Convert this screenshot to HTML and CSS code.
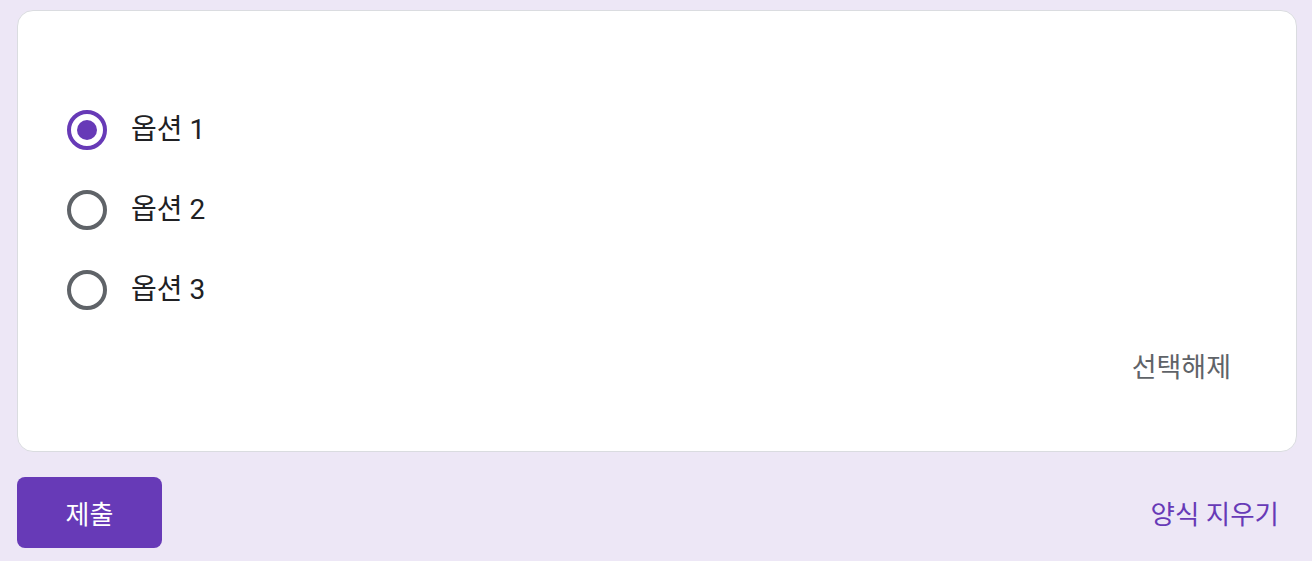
FILE: index.html
```html
<!DOCTYPE html>
<html lang="ko">
<head>
<meta charset="utf-8">
<link rel="stylesheet" href="styles.css">
</head>
<body>
<div class="page">
  <div class="card">
    <div class="options">
      <label class="option">
        <span class="radio checked"><span class="dot"></span></span>
        <span class="label">옵션 1</span>
      </label>
      <label class="option">
        <span class="radio"></span>
        <span class="label">옵션 2</span>
      </label>
      <label class="option">
        <span class="radio"></span>
        <span class="label">옵션 3</span>
      </label>
    </div>
    <div class="clear-row">
      <span class="clear">선택해제</span>
    </div>
  </div>
  <div class="footer">
    <button class="submit">제출</button>
    <span class="reset">양식 지우기</span>
  </div>
</div>
</body>
</html>
```

FILE: styles.css
```css
html, body {
  margin: 0;
  padding: 0;
  background: #ede7f6;
  font-family: Roboto, "Noto Sans CJK KR", sans-serif;
}

.page {
  padding: 10px 15px 0 17px;
}

.card {
  box-sizing: border-box;
  height: 442px;
  background: #ffffff;
  border: 1.5px solid #dadce0;
  border-radius: 16px;
  padding: 79px 65px 0 49px;
  display: flex;
  flex-direction: column;
}

.options {
  display: flex;
  flex-direction: column;
}

.option {
  height: 80px;
  display: flex;
  align-items: center;
  gap: 24px;
}

.radio {
  box-sizing: border-box;
  width: 40px;
  height: 40px;
  border: 4px solid #5f6368;
  border-radius: 50%;
  display: flex;
  align-items: center;
  justify-content: center;
}

.radio.checked {
  border-color: #673ab7;
}

.dot {
  width: 20px;
  height: 20px;
  border-radius: 50%;
  background: #673ab7;
}

.label {
  font-size: 28px;
  line-height: 40px;
  color: #202124;
  margin-top: -1px;
}

.clear-row {
  display: flex;
  justify-content: flex-end;
  margin-top: 18px;
}

.clear {
  font-size: 27px;
  line-height: 40px;
  color: #5f6368;
}

.footer {
  margin-top: 25px;
  display: flex;
  justify-content: space-between;
  align-items: center;
}

.submit {
  width: 145px;
  height: 71px;
  border: none;
  border-radius: 8px;
  background: #673ab7;
  color: #ffffff;
  font-family: Roboto, "Noto Sans CJK KR", sans-serif;
  font-size: 26px;
  padding: 0;
}

.reset {
  font-size: 26.5px;
  color: #673ab7;
  margin-right: 18px;
}
```
